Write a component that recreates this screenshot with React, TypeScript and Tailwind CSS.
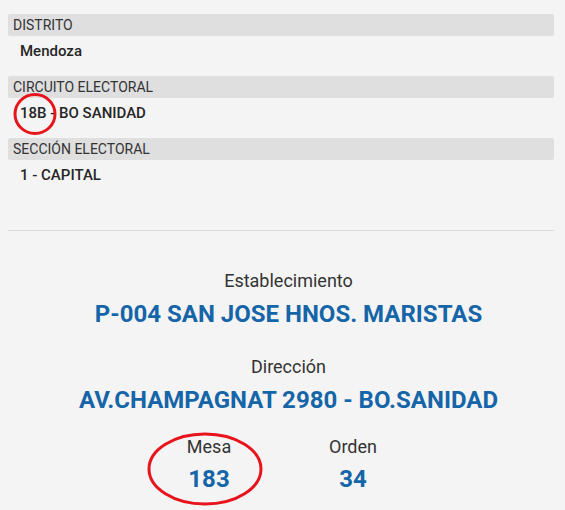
import React from "react";

const blocks = [
  { label: "DISTRITO", value: "Mendoza" },
  { label: "CIRCUITO ELECTORAL", value: "18B - BO SANIDAD" },
  { label: "SECCIÓN ELECTORAL", value: "1 - CAPITAL" },
];

export default function App() {
  return (
    <div
      className="relative w-full min-h-[510px] bg-[#f4f4f4] pt-[14px] pl-2 pr-[11px] text-[#333]"
      style={{ fontFamily: "Roboto, 'Noto Sans', sans-serif" }}
    >
      <div className="flex flex-col gap-3">
        {blocks.map((b) => (
          <div key={b.label}>
            <div className="h-[22px] rounded-[2px] bg-[#dfdfdf] pl-[5px] text-[14px] leading-[22px] text-[#333]">
              {b.label}
            </div>
            <div className="h-[28px] pl-3 text-[15px] font-medium leading-[30px] text-[#262626]">
              {b.value}
            </div>
          </div>
        ))}
      </div>

      <div className="mt-[42px] border-t border-[#dcdcdc]" />

      <div className="flex flex-col items-center pt-[38px] text-center">
        <div className="flex flex-col items-center pl-[15px]">
          <div className="text-[18px] leading-[24px] text-[#333]">Establecimiento</div>
          <div className="mt-[5px] text-[24px] font-bold leading-[32px] text-[#1565a8]">
            P-004 SAN JOSE HNOS. MARISTAS
          </div>
          <div className="mt-[25px] text-[18px] leading-[24px] text-[#333]">Dirección</div>
          <div className="mt-[5px] text-[24px] font-bold leading-[32px] text-[#1565a8]">
            AV.CHAMPAGNAT 2980 - BO.SANIDAD
          </div>
        </div>
        <div className="mt-[19px] grid grid-cols-[144px_144px]">
          <div className="flex flex-col items-center">
            <div className="text-[18px] leading-[24px] text-[#333]">Mesa</div>
            <div className="mt-[4px] text-[24px] font-bold leading-[32px] text-[#1565a8]">183</div>
          </div>
          <div className="flex flex-col items-center">
            <div className="text-[18px] leading-[24px] text-[#333]">Orden</div>
            <div className="mt-[4px] text-[24px] font-bold leading-[32px] text-[#1565a8]">34</div>
          </div>
        </div>
      </div>

      <svg
        className="pointer-events-none absolute left-0 top-0"
        width="565"
        height="510"
        viewBox="0 0 565 510"
      >
        <ellipse cx="35" cy="114" rx="20" ry="19.5" fill="none" stroke="#e8141c" strokeWidth="3" />
        <ellipse cx="205" cy="469" rx="56" ry="35" fill="none" stroke="#e8141c" strokeWidth="3" />
      </svg>
    </div>
  );
}
